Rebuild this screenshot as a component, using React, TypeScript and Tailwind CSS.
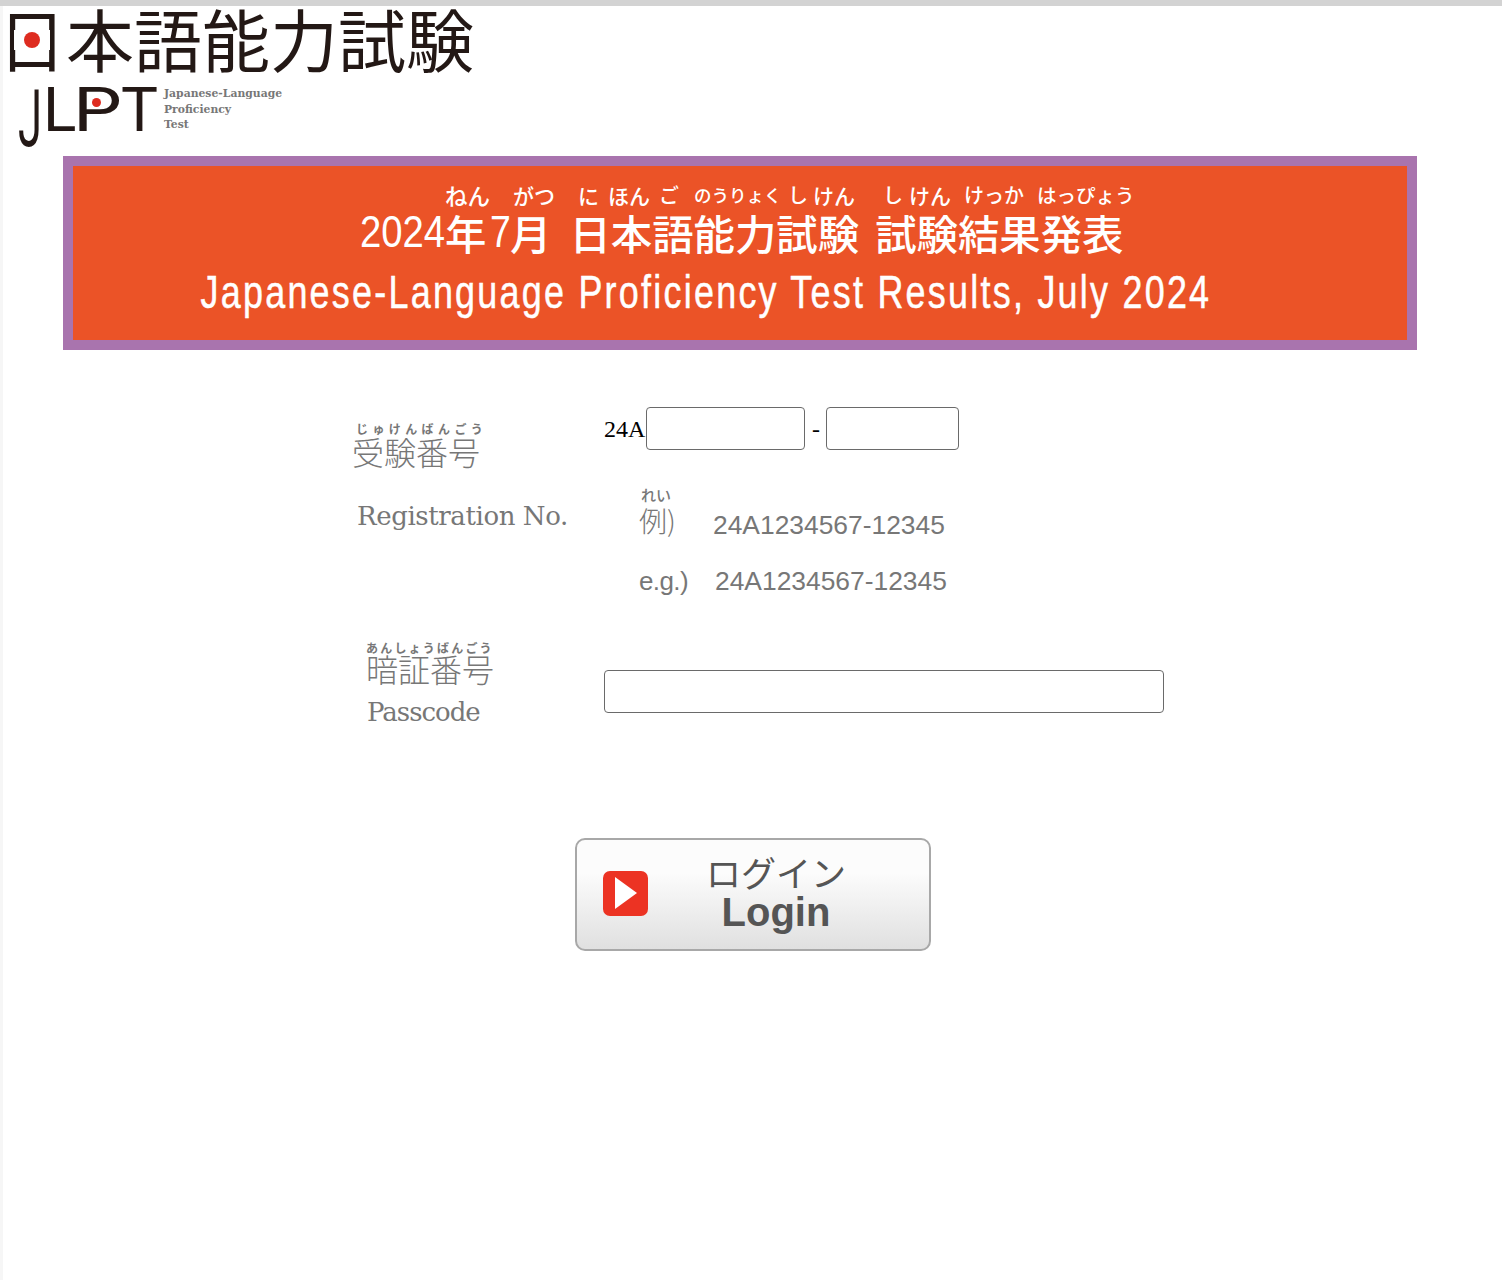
const sans = "font-['Noto_Sans_CJK_JP','Liberation_Sans',sans-serif]";

const bannerRuby = [
  { text: "ねん", cls: "ml-[372px] w-[47px] text-[22.5px]" },
  { text: "がつ", cls: "ml-[21px] w-[43px] text-[21px]" },
  { text: "に", cls: "ml-[22px] w-[23px] text-[21px]" },
  { text: "ほん", cls: "ml-[7px] w-[44px] text-[21px]" },
  { text: "ご", cls: "ml-[7px] w-[20px] text-[20px]" },
  { text: "のうりょく", cls: "ml-[15px] w-[88px] text-[17.5px]" },
  { text: "し", cls: "ml-[6px] w-[20px] text-[20px]" },
  { text: "けん", cls: "ml-[5px] w-[43px] text-[21px]" },
  { text: "し", cls: "ml-[27px] w-[20px] text-[20px]" },
  { text: "けん", cls: "ml-[6px] w-[42px] text-[21px]" },
  { text: "けっか", cls: "ml-[13px] w-[61px] text-[20px]" },
  { text: "はっぴょう", cls: "ml-[12px] w-[98px] text-[19.5px]" },
];

function Logo() {
  return (
    <div className="relative h-[150px] text-[#231815]">
      <div className={`${sans} -ml-[5px] h-[76px] text-[68px] leading-[64px] font-normal whitespace-nowrap`}>
        日本語能力試験
      </div>
      {/* the mark replaces the bar of the first character with a red dot */}
      <span className="absolute left-[11px] top-[24px] h-[20px] w-[36px] bg-white" />
      <span className="absolute left-[21px] top-[26px] h-[16px] w-[16px] rounded-full bg-[#de2c20]" />
      <div className="flex items-start pl-[15px]">
        <div className="flex h-[70px] w-[145px] items-start font-['Roboto',sans-serif] text-[62px] leading-[56px] font-normal">
          <span className="w-[25px] origin-top-left scale-x-[0.7] scale-y-[1.3]">J</span>
          <span className="w-[30px]">L</span>
          <span className="w-[48px] origin-left scale-x-[1.25]">P</span>
          <span>T</span>
        </div>
        <div className="pl-[1px] pt-[4px] font-['DejaVu_Serif',serif] text-[10.8px] leading-[15.5px] font-bold text-[#777]">
          <div>Japanese-Language</div>
          <div>Proficiency</div>
          <div>Test</div>
        </div>
      </div>
      <span className="absolute left-[89px] top-[92px] h-[9px] w-[9px] rounded-full bg-[#de2c20]" />
    </div>
  );
}

function Banner() {
  return (
    <div className="ml-[60px] h-[194px] w-[1354px] overflow-hidden border-[10px] border-[#a974ae] bg-[#eb5327] text-white">
      <div className={`${sans} flex h-[41px] items-center pt-[16px] leading-[28px] font-medium whitespace-nowrap`}>
        {bannerRuby.map((r, i) => (
          <span key={i} className={r.cls}>{r.text}</span>
        ))}
      </div>
      <div className={`${sans} flex h-[50px] pl-[287px] text-[41.4px] leading-[50px] font-medium whitespace-nowrap`}>
        <span className="w-[85px] origin-left scale-x-[0.87] font-['Liberation_Sans',sans-serif] text-[44px] font-normal">2024</span>
        <span className="w-[45px]">年</span>
        <span className="w-[20px] origin-left scale-x-[0.85] font-['Liberation_Sans',sans-serif] text-[44px] font-normal">7</span>
        <span>月</span>
        <span className="ml-[18px]">日本語能力試験</span>
        <span className="ml-[16px]">試験結果発表</span>
      </div>
      <div className="mt-[6px] flex h-[58px] justify-center pr-[68px] font-['Liberation_Sans',sans-serif] text-[46px] leading-[58px] whitespace-nowrap">
        <span className="scale-x-[0.78] tracking-[2.9px] [-webkit-text-stroke:0.5px_white]">Japanese-Language Proficiency Test Results, July 2024</span>
      </div>
    </div>
  );
}

function TextField({ className }: { className: string }) {
  return <input className={`rounded-[4px] border border-[#6a6a6a] bg-white ${className}`} />;
}

function LoginForm() {
  return (
    <div className="pl-[349px] text-[#777]">
      <div className="mt-[57px] flex">
        <div className="w-[252px] pt-[13px]">
          <div className={`${sans} h-[15px] pl-[4px] text-[12px] leading-[17px] font-bold tracking-[4.4px] whitespace-nowrap`}>じゅけんばんごう</div>
          <div className={`${sans} h-[32px] text-[32px] leading-[32px] font-light whitespace-nowrap`}>受験番号</div>
          <div className="mt-[31px] pl-[5px] font-['DejaVu_Serif',serif] text-[26px] leading-[36px] font-extralight tracking-[-0.4px] whitespace-nowrap">Registration No.</div>
        </div>
        <div>
          <div className="flex h-[43px] items-center font-['Liberation_Serif',serif] text-black">
            <span className="w-[42px] text-[24px]">24A</span>
            <TextField className="h-[43px] w-[159px]" />
            <span className="ml-[7px] w-[14px] text-[24px]">-</span>
            <TextField className="h-[43px] w-[133px]" />
          </div>
          <div className={`${sans} mt-[38px] h-[16px] pl-[37px] text-[15px] leading-[14px] font-medium whitespace-nowrap`}>れい</div>
          <div className="flex h-[33px] items-center pl-[35px]">
            <span className={`${sans} w-[74px] text-[28px] leading-[33px] font-light`}>例)</span>
            <span className="translate-y-[5px] font-['Liberation_Sans',sans-serif] text-[26.4px] leading-[33px]">24A1234567-12345</span>
          </div>
          <div className="mt-[28px] flex h-[33px] items-center pl-[35px]">
            <span className="w-[76px] font-['Liberation_Sans',sans-serif] text-[26px] leading-[33px] tracking-[-0.6px]">e.g.)</span>
            <span className="font-['Liberation_Sans',sans-serif] text-[26.4px] leading-[33px]">24A1234567-12345</span>
          </div>
        </div>
      </div>
      <div className="mt-[41px] flex">
        <div className="w-[252px] pl-[14px]">
          <div className={`${sans} h-[13px] text-[12px] leading-[17px] font-bold tracking-[2.2px] whitespace-nowrap`}>あんしょうばんごう</div>
          <div className={`${sans} h-[32px] text-[32px] leading-[32px] font-light whitespace-nowrap`}>暗証番号</div>
          <div className="mt-[10px] pl-[1px] font-['DejaVu_Serif',serif] text-[26px] leading-[36px] font-extralight tracking-[-1px] whitespace-nowrap">Passcode</div>
        </div>
        <div className="pt-[31px]">
          <TextField className="block h-[43px] w-[560px]" />
        </div>
      </div>
    </div>
  );
}

function LoginButton() {
  return (
    <div className="ml-[572px] mt-[108px] flex h-[113px] w-[356px] items-center rounded-[10px] border-2 border-[#a8a8a8] bg-gradient-to-b from-[#fcfcfc] from-30% to-[#e0e0e0] pl-[26px]">
      <div className="mb-[3px] flex h-[45px] w-[45px] items-center justify-center rounded-[7px] bg-[#ec3323]">
        <svg width="26" height="34" viewBox="0 0 26 34">
          <path d="M2 1 L24 17 L2 33 Z" fill="#fff" />
        </svg>
      </div>
      <div className="ml-[25px] w-[206px] text-center text-[#555]">
        <div className={`${sans} -translate-y-[3px] text-[35px] leading-[40px] font-normal`}>ログイン</div>
        <div className="-translate-y-[3px] font-['Liberation_Sans',sans-serif] text-[40px] leading-[40px] font-bold">Login</div>
      </div>
    </div>
  );
}

export default function App() {
  return (
    <div className="h-[1280px] bg-white">
      <div className="h-[6px] bg-[#d3d3d3]" />
      <div className="flex h-[1274px]">
        <div className="w-[3px] bg-[#f6f6f6]" />
        <div className="flex-1">
          <Logo />
          <Banner />
          <LoginForm />
          <LoginButton />
        </div>
      </div>
    </div>
  );
}
